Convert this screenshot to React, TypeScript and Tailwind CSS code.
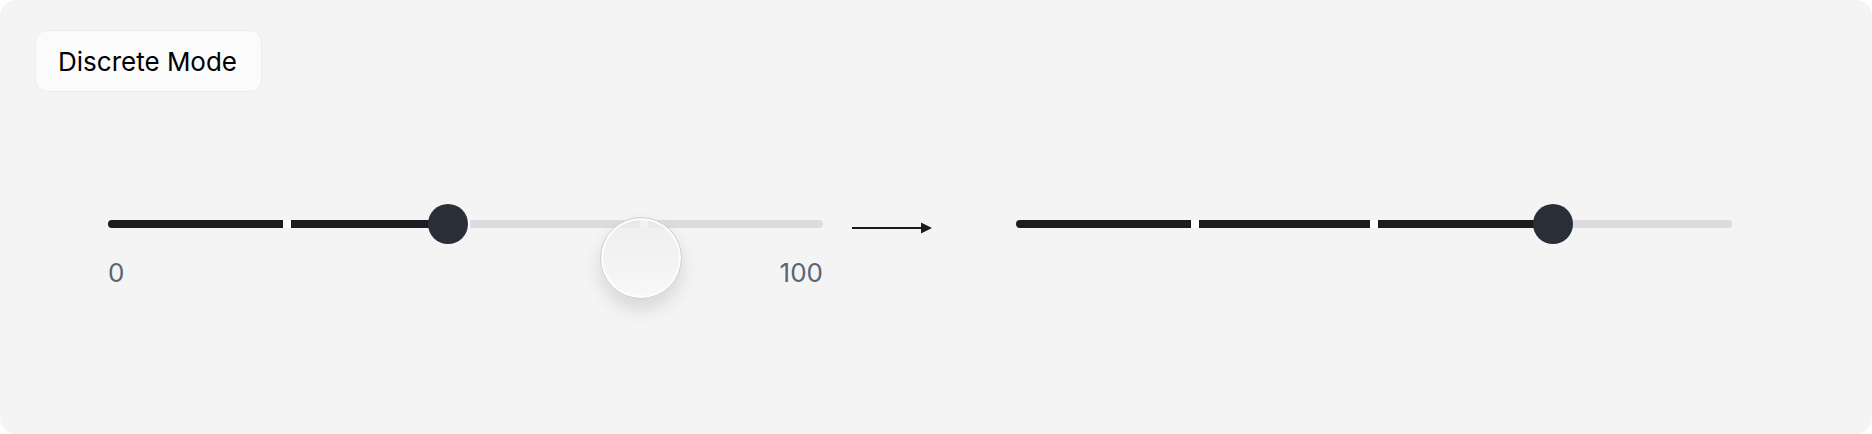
import React from 'react';

type SliderProps = {
  value: number;
  marks: number[];
  width: number;
  showLabels?: boolean;
  ghostAt?: number;
};

function DiscreteSlider({ value, marks, width, showLabels, ghostAt }: SliderProps) {
  const filled = (value / 100) * width;

  return (
    <div className="flex flex-col" style={{ width }}>
      <div className="relative h-10 flex items-center">
        {/* track */}
        <div className="relative h-2 w-full rounded-full bg-[#dcdce0]">
          <div className="absolute left-0 top-0 h-2 rounded-l-full bg-[#1b1c20]" style={{ width: filled }} />
          {marks.map((m) => (
            <div
              key={m}
              className="absolute top-0 h-2 w-2 bg-white"
              style={{ left: (m / 100) * width - 4 }}
            />
          ))}
        </div>
        {/* thumb */}
        <div
          className="absolute top-0 h-10 w-10 rounded-full bg-[#282f38]"
          style={{ left: filled - 20 }}
        />
        {ghostAt !== undefined && (
          <div
            className="absolute top-[13px] h-[82px] w-[82px] rounded-full border border-[#cfcfcf] bg-linear-to-b from-[rgba(236,236,236,0.75)] to-[rgba(248,248,248,0.95)] shadow-[0_10px_18px_rgba(0,0,0,0.12),inset_0_0_0_2px_rgba(255,255,255,0.85)]"
            style={{ left: (ghostAt / 100) * width - 41 }}
          />
        )}
      </div>
      {showLabels && (
        <div className="mt-[13px] flex justify-between text-[26px] leading-8 text-[#5b6475]">
          <span>0</span>
          <span>100</span>
        </div>
      )}
    </div>
  );
}

export default function App() {
  return (
    <div className="h-[434px] w-[1872px] bg-white font-['Inter',sans-serif]">
      <div className="h-full w-full rounded-2xl bg-[#f4f4f4] pl-[35px] pt-[30px]">
        <button className="flex h-[62px] items-center rounded-xl border border-[#ececec] bg-[#fbfbfb] pl-[22px] pr-[24px] text-[26px] text-black">
          Discrete Mode
        </button>

        <div className="mt-[112px] ml-[73px] flex items-start">
          <DiscreteSlider value={47.5} marks={[25, 50, 75]} width={715} showLabels ghostAt={74.6} />

          <svg className="ml-[29px] mr-[84px] mt-[18px]" width="80" height="12" viewBox="0 0 80 12">
            <line x1="0" y1="6" x2="71" y2="6" stroke="#1a1a1a" strokeWidth="2" />
            <polygon points="69,0.5 80,6 69,11.5" fill="#1a1a1a" />
          </svg>

          <DiscreteSlider value={75} marks={[25, 50, 75]} width={716} />
        </div>
      </div>
    </div>
  );
}
